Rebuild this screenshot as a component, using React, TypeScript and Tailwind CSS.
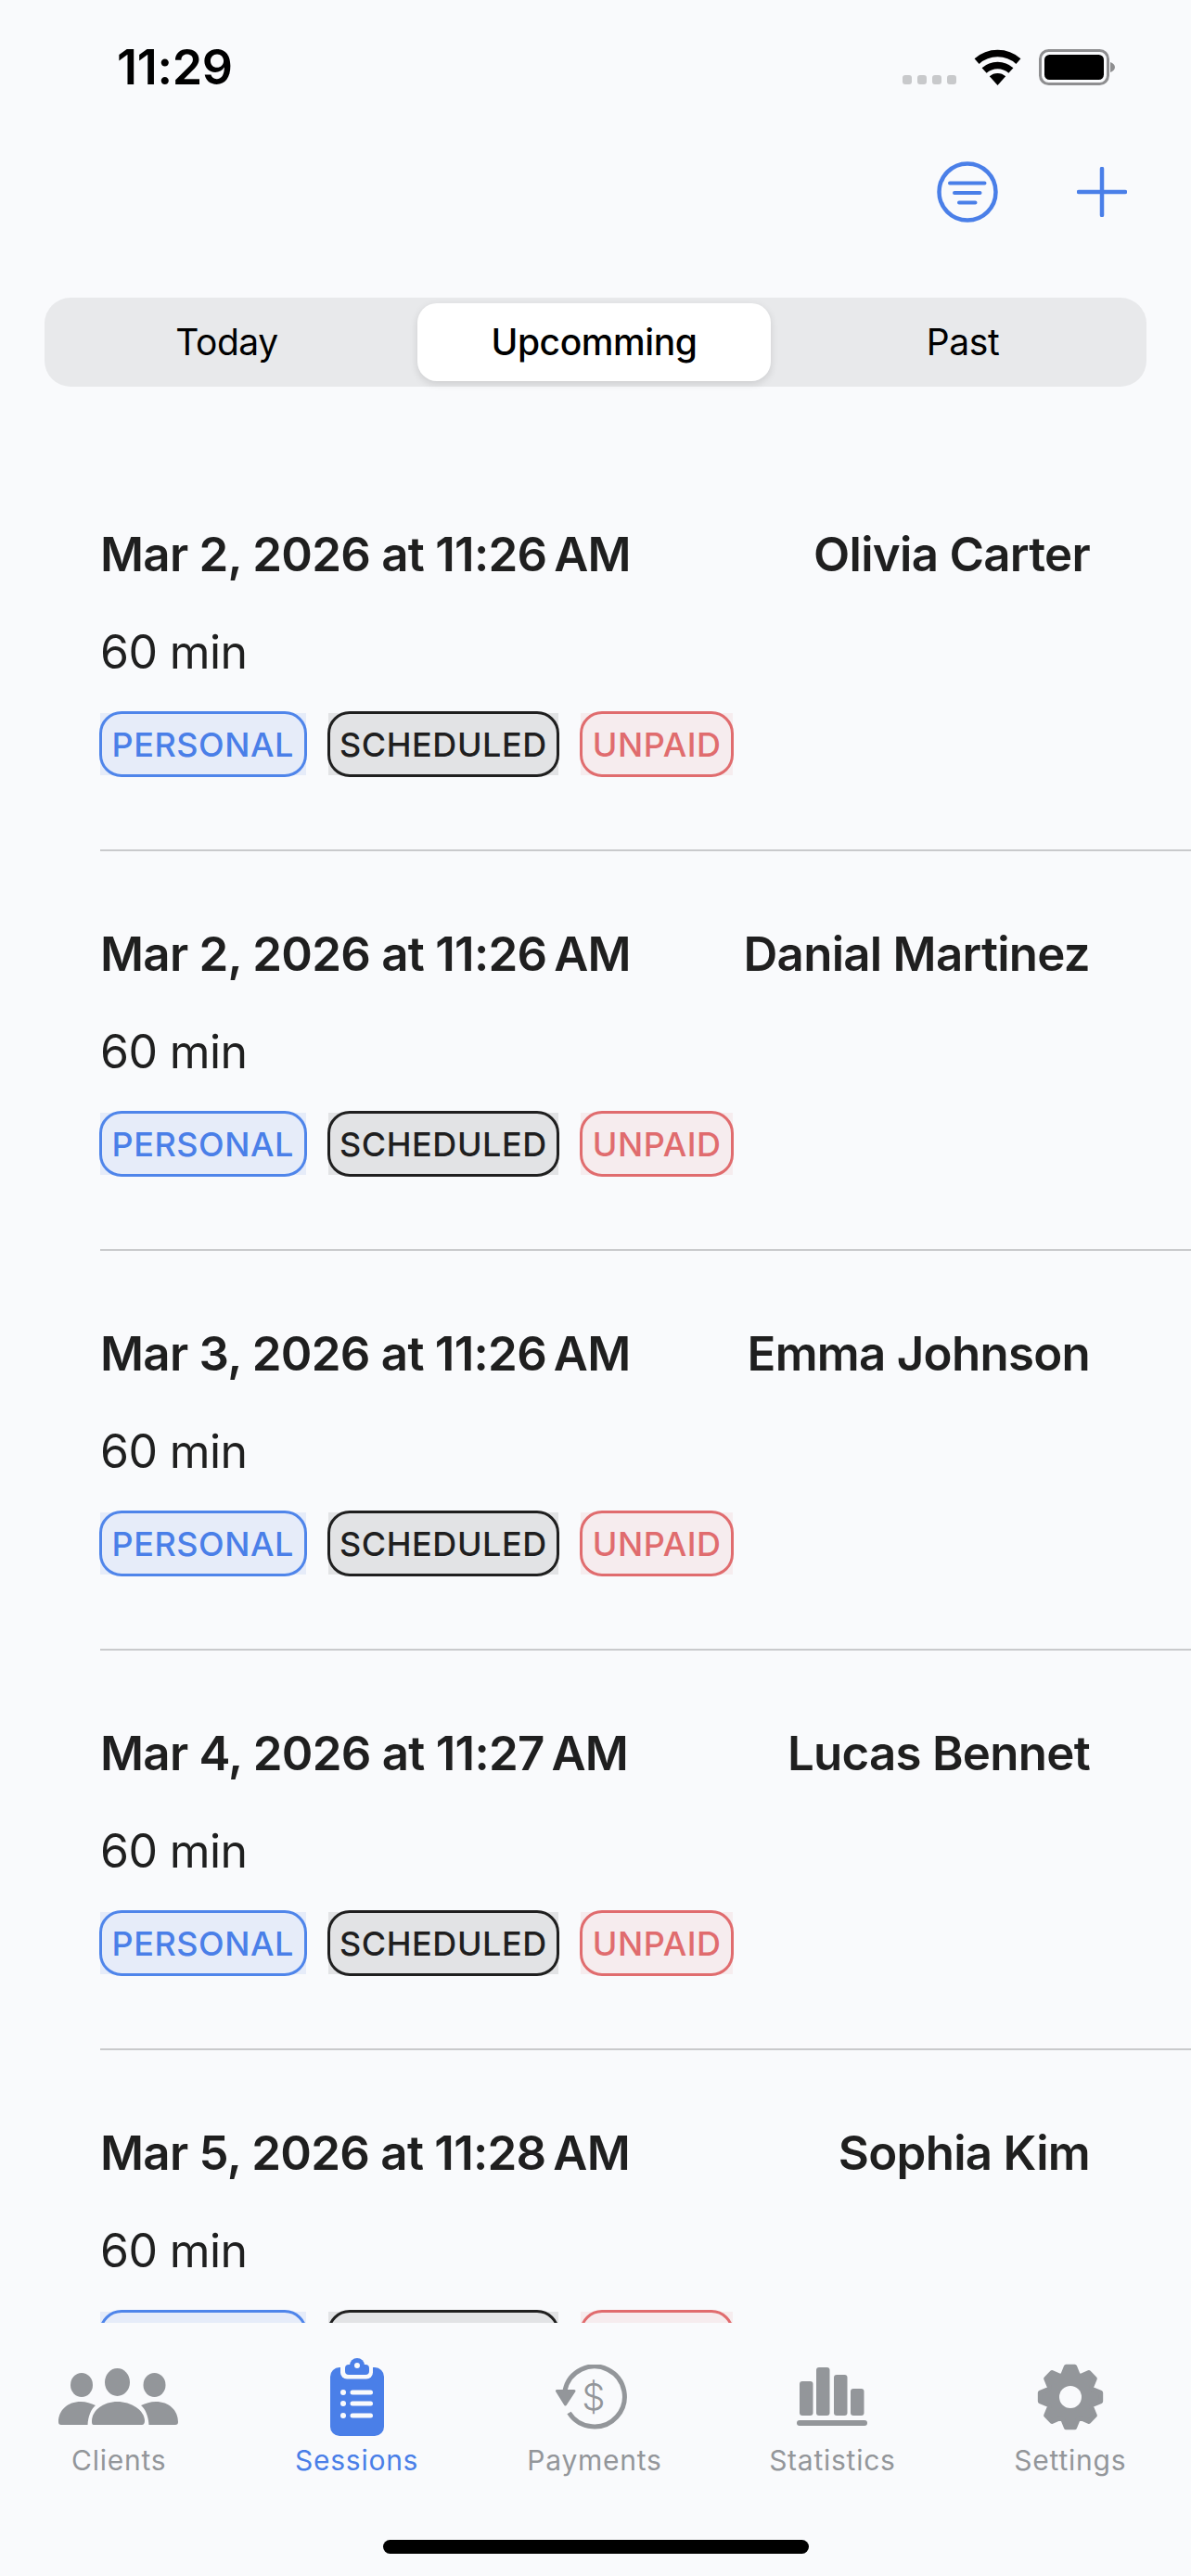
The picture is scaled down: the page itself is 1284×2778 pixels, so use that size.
import React from 'react';

const sessions = [
  { date: 'Mar 2, 2026 at 11:26\u202fAM', client: 'Olivia Carter' },
  { date: 'Mar 2, 2026 at 11:26\u202fAM', client: 'Danial Martinez' },
  { date: 'Mar 3, 2026 at 11:26\u202fAM', client: 'Emma Johnson' },
  { date: 'Mar 4, 2026 at 11:27\u202fAM', client: 'Lucas Bennet' },
  { date: 'Mar 5, 2026 at 11:28\u202fAM', client: 'Sophia Kim' },
];

const BG = '#F9FAFC';

const StatusIcons = () => (
  <svg width="230" height="40" viewBox="0 0 230 40">
    {[0, 16, 32, 48].map(x => (
      <rect key={x} x={x} y="28" width="10" height="10" rx="3" fill="#C8C9CB" />
    ))}
    <g transform="translate(78 0)" fill="none" stroke="#000" strokeWidth="7.5">
      <path d="M2.1 13.1A33.5 33.5 0 0 1 46.9 13.1" />
      <path d="M10.1 23A21.5 21.5 0 0 1 38.9 23" />
      <path d="M24.5 39L15.8 29.3A13 13 0 0 1 33.2 29.3Z" fill="#000" stroke="none" />
    </g>
    <rect x="148.5" y="1.5" width="73" height="36" rx="9" fill="none" stroke="#8E8E90" strokeWidth="3" />
    <rect x="153" y="6" width="64" height="27" rx="5.5" fill="#000" />
    <path d="M224 14C227 15 229 17 229 19.5C229 22 227 24 224 25Z" fill="#8E8E90" />
  </svg>
);

const FilterIcon = () => (
  <svg width="66" height="66" viewBox="0 0 66 66" fill="none" stroke="#4A7FE8" strokeLinecap="round">
    <circle cx="33" cy="33" r="30.5" strokeWidth="4.5" />
    <path d="M14 23.5H51.5M19 34H46.5M24 44.5H41.5" strokeWidth="4" />
  </svg>
);

const PlusIcon = () => (
  <svg width="54" height="54" viewBox="0 0 54 54" fill="none" stroke="#4A7FE8" strokeWidth="4.5" strokeLinecap="round">
    <path d="M27 2V52M2 27H52" />
  </svg>
);

const ClientsIcon = () => (
  <svg width="130" height="62" viewBox="0 0 130 62" fill="#93969A">
    <ellipse cx="25" cy="18" rx="12" ry="13" />
    <ellipse cx="63.5" cy="15" rx="13.5" ry="15" />
    <ellipse cx="103.5" cy="18" rx="12" ry="13" />
    <path d="M38 61C36 61 36 59 36 57C36 45 49 36 63.5 36C78 36 93 45 93 57C93 59 92 61 90 61Z" />
    <path d="M3 61C1 61 0 60 0 58C0 45 10 36 24 36C30 36 35 38 40 40C35 44 32 52 31.5 61Z" />
    <path d="M126 61C128 61 129 60 129 58C129 45 119 36 105 36C99 36 94 38 89 40C94 44 97 52 97.5 61Z" />
  </svg>
);

const SessionsIcon = () => (
  <svg width="58" height="84" viewBox="0 0 58 84">
    <rect x="0" y="10" width="58" height="74" rx="10" fill="#4A7FE8" />
    <rect x="11" y="0" width="35" height="22.5" rx="7" fill={BG} />
    <rect x="16" y="7" width="26" height="11" rx="4" fill="#4A7FE8" />
    <circle cx="29" cy="8" r="8" fill="#4A7FE8" />
    <circle cx="29" cy="8" r="3" fill={BG} />
    {[37, 49, 62].map(y => (
      <g key={y} fill={BG}>
        <circle cx="14" cy={y} r="3" />
        <rect x="21.5" y={y - 2.5} width="24.5" height="5" rx="2.5" />
      </g>
    ))}
  </svg>
);

const PaymentsIcon = () => (
  <svg width="84" height="70" viewBox="0 0 84 70" fill="none">
    <path d="M14.5 52A32.5 32.5 0 1 0 10 28" stroke="#93969A" strokeWidth="5" />
    <path d="M1.5 28.5H20L10.5 43Z" fill="#93969A" stroke="#93969A" strokeWidth="3" strokeLinejoin="round" />
    <text x="41" y="49" textAnchor="middle" fontSize="40" fontWeight="300" fontFamily="Inter, sans-serif" fill="#93969A">$</text>
  </svg>
);

const StatisticsIcon = () => (
  <svg width="76" height="63" viewBox="0 0 76 63" fill="#93969A">
    <rect x="3" y="15" width="14.5" height="37" rx="3" />
    <rect x="21" y="0" width="14.5" height="52" rx="3" />
    <rect x="40" y="8" width="14.5" height="44" rx="3" />
    <rect x="58" y="23" width="14.5" height="29" rx="3" />
    <rect x="0" y="57" width="76" height="6" rx="3" />
  </svg>
);

// gear outline, worked out once from the tooth angles
const gearPath = Array.from({ length: 8 }, (_, i) => {
  const a = (i * Math.PI) / 4 - Math.PI / 2;
  const pt = (r: number, d: number) =>
    `${(36 + r * Math.cos(a + d)).toFixed(2)} ${(36 + r * Math.sin(a + d)).toFixed(2)}`;
  const base = 0.34;
  const tip = 0.14;
  return `${i === 0 ? 'M' : 'L'}${pt(25, -base)}L${pt(33, -tip)}L${pt(33, tip)}L${pt(25, base)}`;
}).join('') + 'Z';

const SettingsIcon = () => (
  <svg width="72" height="72" viewBox="0 0 72 72">
    <path d={gearPath} fill="#93969A" stroke="#93969A" strokeWidth="5" strokeLinejoin="round" />
    <circle cx="36" cy="36" r="12" fill={BG} />
  </svg>
);

const tabs = [
  { label: 'Clients', icon: <ClientsIcon /> },
  { label: 'Sessions', icon: <SessionsIcon />, active: true },
  { label: 'Payments', icon: <PaymentsIcon /> },
  { label: 'Statistics', icon: <StatisticsIcon /> },
  { label: 'Settings', icon: <SettingsIcon /> },
];

const Tag = ({ label, box, ring, text }: { label: string; box: string; ring: string; text: string }) => (
  <div className={`relative flex h-[67px] items-center px-[12.5px] text-[36px] font-medium tracking-[0.55px] ${box} ${text}`}>
    {label}
    <div className={`absolute -inset-x-px -inset-y-[2px] rounded-[24px] border-[3px] ${ring}`} />
  </div>
);

const SessionRow = ({ date, client }: { date: string; client: string }) => (
  <div className="border-b-2 border-[#C9CACC] pb-[80px] pr-[109px] pt-[81px] text-[#1F1F1F]">
    <div className="flex h-[60px] items-center justify-between text-[51px] font-semibold leading-[60px] tracking-[-0.72px]">
      <span>{date}</span>
      <span>{client}</span>
    </div>
    <div className="mt-[45px] h-[60px] text-[50px] leading-[60px] tracking-[-0.6px]">60 min</div>
    <div className="mt-[36px] flex gap-[24px]">
      <Tag label="PERSONAL" box="bg-[#E6ECF9]" ring="border-[#4F85EA]" text="text-[#4A7FE8]" />
      <Tag label="SCHEDULED" box="bg-[#E2E3E5]" ring="border-[#1F1F1F]" text="text-[#1F1F1F]" />
      <Tag label="UNPAID" box="bg-[#F6ECEE]" ring="border-[#E06C6E]" text="text-[#E06C6E]" />
    </div>
  </div>
);

export default function App() {
  return (
    <div className="flex h-[2778px] w-[1284px] flex-col overflow-hidden bg-[#F9FAFC] font-['Inter',sans-serif]">
      <div className="flex h-[144px] shrink-0 items-start justify-between pl-[126px] pr-[81px]">
        <div className="pt-[43px] text-[52px] font-semibold leading-[60px] tracking-[-0.3px] text-black">11:29</div>
        <div className="pt-[53px]">
          <StatusIcons />
        </div>
      </div>

      <div className="flex h-[126px] shrink-0 items-center justify-end gap-[85px] pr-[69px]">
        <FilterIcon />
        <PlusIcon />
      </div>

      <div className="mx-[48px] mt-[51px] grid h-[96px] shrink-0 grid-cols-3 items-center rounded-[28px] bg-[#E8E9EB] text-center text-[39px] tracking-[-0.4px] text-black">
        <div className="pr-[3px]">Today</div>
        <div className="ml-[6px] mr-[9px] flex h-[84px] items-center justify-center rounded-[21px] bg-white font-medium shadow-[0_3px_8px_rgba(0,0,0,0.12)]">
          Upcomming
        </div>
        <div>Past</div>
      </div>

      <main className="min-h-0 flex-1 overflow-hidden pl-[108px] pt-[70px]">
        {sessions.map((s, i) => (
          <SessionRow key={i} date={s.date} client={s.client} />
        ))}
      </main>

      <nav className="relative h-[273px] shrink-0">
        <div className="grid grid-cols-5 pr-[2px]">
          {tabs.map(t => (
            <div key={t.label} className="flex flex-col items-center">
              <div className="flex h-[124px] items-center pt-[35px]">{t.icon}</div>
              <div className={`mt-[6px] text-[30px] leading-[36px] tracking-[0.75px] ${t.active ? 'text-[#4A7FE8]' : 'text-[#93969A]'}`}>
                {t.label}
              </div>
            </div>
          ))}
        </div>
        <div className="absolute bottom-[24px] left-[413px] h-[15px] w-[459px] rounded-full bg-black" />
      </nav>
    </div>
  );
}
